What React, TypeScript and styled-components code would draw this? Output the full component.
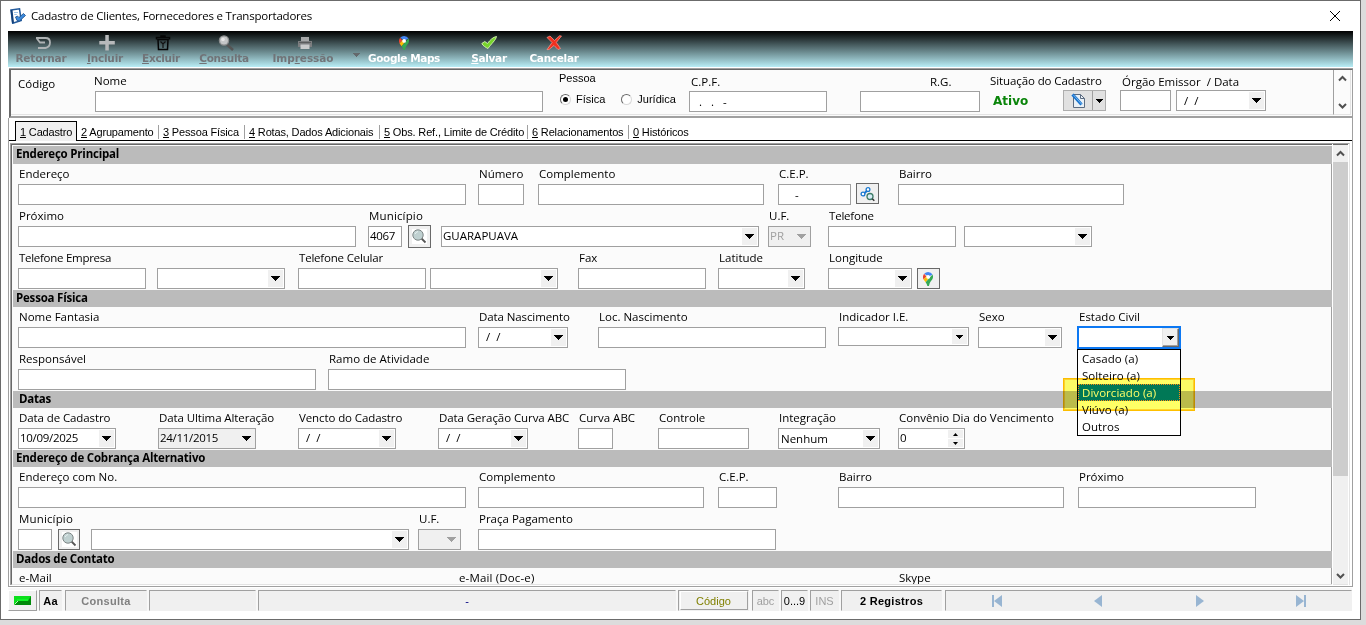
import { ReactNode } from "react";
import styled, { createGlobalStyle, css } from "styled-components";

const GlobalStyle = createGlobalStyle`
  * {
    box-sizing: border-box;
  }

  body {
    margin: 0;
    background: #dcdcdc;
    font-family: "Open Sans", sans-serif;
    font-size: 11.5px;
    color: #000;
    overflow: hidden;
  }
`;

const sansSerif = `"Liberation Sans", Arial, sans-serif`;
const verdana = `"DejaVu Sans", Verdana, sans-serif`;

const Window = styled.div`
  display: flex;
  flex-direction: column;
  width: 1361px;
  height: 620px;
  padding: 0 7px 8px;
  background: #fff;
  border: 1px solid #6b6b6b;
`;

const TitleBar = styled.div`
  display: flex;
  align-items: center;
  height: 30px;
  flex-shrink: 0;
  padding: 0 12px 1px 2px;
  letter-spacing: -0.21px;
`;

const Title = styled.span`
  flex: 1;
  padding-left: 5px;
`;

const Toolbar = styled.div`
  display: flex;
  width: 1345px;
  height: 36px;
  flex-shrink: 0;
  background: linear-gradient(#000, #b9eef6);
`;

const ToolButton = styled.div<{ $w: number; $off?: boolean; $track?: number }>`
  display: flex;
  flex-direction: column;
  align-items: center;
  width: ${(p) => p.$w}px;
  padding-top: 4px;
  font: bold 10.5px/14px ${verdana};
  letter-spacing: ${(p) => p.$track ?? -0.3}px;
  white-space: nowrap;
  color: ${(p) => (p.$off ? "#717478" : "#fff")};

  svg {
    flex-shrink: 0;
    margin-left: ${(p) => (p.$off ? 3 : 0)}px;
  }
`;

const ToolMenu = styled.div`
  display: flex;
  justify-content: center;
  width: 22px;
  padding: 22px 0 0 3px;
`;

const HeaderPanel = styled.div`
  display: flex;
  width: 1344px;
  height: 49px;
  margin-top: 2px;
  flex-shrink: 0;
  margin-left: 1px;
  background: #fbfbfb;
  border-top: 1px solid #696969;
  border-left: 2px solid #696969;
  border-right: 1px solid #a0a0a0;
  border-bottom: 2px solid #a0a0a0;
  box-shadow: 0 -1px 0 #a0a0a0;
`;

const HeaderForm = styled.div`
  display: flex;
  flex: 1;
  margin-bottom: 1px;
  border-bottom: 1px solid #e3e3e3;
`;

const HeaderGroup = styled.div<{ $gap: number; $w: number; $h?: number }>`
  display: flex;
  flex-direction: column;
  justify-content: space-between;
  flex-shrink: 0;
  width: ${(p) => p.$w}px;
  height: ${(p) => p.$h ?? 42}px;
  margin-left: ${(p) => p.$gap}px;
`;

const HeaderLabel = styled.div<{ $top: number; $indent?: number; $track?: number }>`
  margin-left: ${(p) => p.$indent ?? 0}px;
  padding-top: ${(p) => p.$top}px;
  height: ${(p) => p.$top + 15}px;
  line-height: 15px;
  letter-spacing: ${(p) => p.$track ?? 0}px;
  white-space: pre;
`;

const RadioGroupLabel = styled(HeaderLabel)`
  font: 11px/15px ${sansSerif};
`;

const RadioRow = styled.div`
  display: flex;
  align-items: center;
  gap: 16px;
  height: 28px;
  padding-left: 1px;
  font: 11px ${sansSerif};
`;

const RadioOption = styled.div`
  display: flex;
  align-items: center;
`;

const Radio = styled.span<{ $checked?: boolean }>`
  display: flex;
  align-items: center;
  justify-content: center;
  width: 11px;
  height: 11px;
  margin-right: 5px;
  border: 1px solid;
  border-color: #696969 #d8d8d8 #d8d8d8 #696969;
  border-radius: 50%;
  background: #fff;

  &::after {
    content: "";
    width: 5px;
    height: 5px;
    border-radius: 50%;
    background: ${(p) => (p.$checked ? "#000" : "transparent")};
  }
`;

const Status = styled.div`
  width: 37px;
  padding-left: 3px;
  font: bold 12px/16px ${verdana};
  color: #0a850a;
`;

const HeaderLine = styled.div`
  display: flex;
  align-items: center;
`;

const SplitButton = styled.div`
  display: flex;
  flex-shrink: 0;
  width: 43px;
  height: 21px;
  margin-left: 36px;
  border: 1px solid #adadad;
  background: #e1e1e1;

  > span {
    display: flex;
    align-items: center;
    justify-content: center;
    flex: 1;
  }

  > span:first-child {
    flex: 0 0 29px;
    border-right: 1px solid #a0a0a0;
  }
`;

const ScrollBar = styled.div<{ $w: number }>`
  display: flex;
  flex-direction: column;
  justify-content: space-between;
  align-items: center;
  flex-shrink: 0;
  width: ${(p) => p.$w}px;
  background: #f0f0f0;
`;

const HeaderScroll = styled(ScrollBar)`
  margin-right: 1px;
  margin-bottom: 1px;
  background: #fbfbfb;
  border-left: 1px solid #a0a0a0;
  border-right: 1px solid #e3e3e3;
  border-bottom: 1px solid #e3e3e3;
`;

const MainScroll = styled(ScrollBar)`
  justify-content: flex-start;
  margin: 0 1px;
  border-top: 1px solid #696969;
  border-bottom: 1px solid #e3e3e3;

  svg:last-child {
    margin-top: auto;
  }
`;

const Thumb = styled.div`
  align-self: stretch;
  flex: 0 0 314px;
  background: #cdcdcd;
`;

const TabsPanel = styled.div`
  display: flex;
  flex-direction: column;
  width: 1345px;
  height: 469px;
  flex-shrink: 0;
  border: 1px solid #a0a0a0;
  border-top: 0;
`;

const TabBar = styled.div`
  display: flex;
  align-items: flex-end;
  height: 23px;
  flex-shrink: 0;
  padding-left: 1px;
  border-bottom: 1px solid #000;
  font: 11px ${sansSerif};
`;

const Tab = styled.div<{ $w: number; $active?: boolean; $last?: boolean }>`
  width: ${(p) => p.$w}px;
  height: 14px;
  margin-bottom: 1px;
  padding-left: 4px;
  line-height: 15px;
  letter-spacing: -0.16px;
  white-space: nowrap;
  border-right: ${(p) => (p.$last ? 0 : 1)}px solid #a0a0a0;

  ${(p) =>
    p.$active &&
    css`
      height: 20px;
      margin: 0 0 -1px 5px;
      padding-top: 3px;
      background: #f0f0f0;
      border: 1px solid #000;
      border-bottom: 0;
    `}
`;

const Page = styled.div`
  display: flex;
  flex: 1;
  min-height: 0;
  margin: 2px 2px 1px 1px;
  border: 1px solid #a0a0a0;
  border-right: 1px solid #e3e3e3;
  border-bottom: 0;
`;

const Sheet = styled.div`
  flex: 1;
  overflow: hidden;
  padding: 1px 0 0 1px;
  background: #fbfbfb;
  border-top: 1px solid #696969;
  border-left: 1px solid #696969;
  border-bottom: 1px solid #e3e3e3;
`;

const SectionTitle = styled.div<{ $indent?: number; $h?: number }>`
  height: ${(p) => p.$h ?? 17}px;
  padding-left: ${(p) => p.$indent ?? 3}px;
  line-height: 16px;
  font-weight: 700;
  letter-spacing: -0.2px;
  background: #bbb;
`;

const SectionBody = styled.div`
  padding-left: 5px;
  border-right: 1px solid #a0a0a0;
`;

const Row = styled.div`
  display: flex;
  align-items: flex-start;
  height: 42px;
`;

const FieldBox = styled.div<{ $w: number; $gap: number }>`
  position: relative;
  flex-shrink: 0;
  width: ${(p) => p.$w}px;
  margin-left: ${(p) => p.$gap}px;
`;

const Label = styled.div<{ $track?: number; $indent?: number }>`
  height: 20px;
  padding-left: ${(p) => p.$indent ?? 1}px;
  line-height: 20px;
  letter-spacing: ${(p) => p.$track ?? 0}px;
  white-space: nowrap;
`;

const Input = styled.div<{ $off?: boolean; $h?: number; $focus?: boolean }>`
  display: flex;
  align-items: center;
  justify-content: space-between;
  width: 100%;
  height: ${(p) => p.$h ?? 21}px;
  padding: 1px;
  border: 1px solid #a0a0a0;
  background: ${(p) => (p.$off ? "#f0f0f0" : "#fff")};
  color: ${(p) => (p.$off ? "#a0a0a0" : "#000")};
  white-space: pre;

  ${(p) =>
    p.$focus &&
    css`
      height: 23px;
      margin-top: -1px;
      padding: 0;
      border: 2px solid #0c78f3;
    `}
`;

const Value = styled.span<{ $track?: number; $dark?: boolean; $top?: number; $indent?: number }>`
  line-height: 15px;
  letter-spacing: ${(p) => p.$track ?? 0}px;
  margin-top: ${(p) => p.$top ?? -2}px;
  margin-left: ${(p) => p.$indent ?? 0}px;
  ${(p) => p.$dark && "color: #000;"}
`;

const DropButton = styled.span<{ $raised?: boolean }>`
  display: flex;
  align-items: center;
  justify-content: center;
  align-self: stretch;
  width: 15px;
  margin-left: auto;
  background: #f0f0f0;

  ${(p) =>
    p.$raised &&
    css`
      width: 17px;
      border: 1px solid;
      border-color: #e3e3e3 #696969 #696969 #e3e3e3;
      box-shadow: inset -1px -1px 0 #a0a0a0;
    `}
`;

const Spin = styled.span`
  display: flex;
  flex-direction: column;
  align-self: stretch;
  gap: 1px;
  width: 15px;

  span {
    display: flex;
    flex: 1;
    align-items: center;
    justify-content: center;
    background: #f0f0f0;
  }
`;

const IconButton = styled.div<{ $gap: number; $top?: number; $w?: number; $h?: number }>`
  display: flex;
  align-items: center;
  justify-content: center;
  flex-shrink: 0;
  width: ${(p) => p.$w ?? 23}px;
  height: ${(p) => p.$h ?? 21}px;
  margin-left: ${(p) => p.$gap}px;
  margin-top: ${(p) => p.$top ?? 20}px;
  border: 1px solid #696969;
  background: #f0f0f0;
`;

const Options = styled.div`
  position: absolute;
  z-index: 2;
  top: 42px;
  left: 0;
  width: 104px;
  border: 1px solid #000;
  background: #fff;
`;

const Option = styled.div<{ $selected?: boolean }>`
  height: 17px;
  padding-left: 4px;
  line-height: 17px;
  letter-spacing: 0.05px;

  ${(p) =>
    p.$selected &&
    css`
      background: #0078d7;
      color: #fff;
      outline: 1px dotted #ff8728;
      outline-offset: -1px;
    `}
`;

const Marker = styled.div`
  position: absolute;
  z-index: 3;
  top: 71px;
  left: -14px;
  width: 132px;
  height: 33px;
  border: 1px solid #ffc000;
  box-shadow: inset 0 0 0 1px #ffd52e;
  background: #ffff66;
  mix-blend-mode: multiply;
`;

const StatusBar = styled.div`
  display: flex;
  align-items: flex-start;
  width: 1344px;
  height: 23px;
  flex-shrink: 0;
  margin-top: 1px;
  padding-top: 2px;
  font: 11px ${sansSerif};
  background: #f8f8f8;
`;

const Cell = styled.div<{ $w: number; $gap?: number; $color?: string; $bold?: boolean; $raised?: boolean }>`
  display: flex;
  align-items: center;
  justify-content: center;
  flex-shrink: 0;
  width: ${(p) => p.$w}px;
  height: 21px;
  margin-left: ${(p) => p.$gap ?? 3}px;
  border: 1px solid;
  border-color: ${(p) => (p.$raised ? "#fff #a0a0a0 #a0a0a0 #fff" : "#a0a0a0 #f0f0f0 #f0f0f0 #a0a0a0")};
  background: #f0f0f0;
  color: ${(p) => p.$color ?? "#000"};
  font-weight: ${(p) => (p.$bold ? "bold" : "normal")};
  letter-spacing: ${(p) => (p.$bold ? 0.3 : 0)}px;
`;

const CellButton = styled.span`
  display: flex;
  align-items: center;
  justify-content: center;
  width: 68px;
  height: 19px;
  border: 1px solid;
  border-color: #fff #a0a0a0 #a0a0a0 #fff;
`;

const Nav = styled(Cell)`
  justify-content: flex-start;
  padding-left: 46px;
  gap: 92px;
`;

const Arrow = ({ small, color = "#000" }: { small?: boolean; color?: string }) => (
  <svg width={small ? 7 : 9} height={small ? 4 : 5} viewBox="0 0 9 5" preserveAspectRatio="none" shapeRendering="crispEdges">
    <path d="M0 0h9L5 5H4z" fill={color} />
  </svg>
);

const Chevron = ({ down }: { down?: boolean }) => (
  <svg width="15" height="17" viewBox="0 0 15 17">
    <path d={down ? "M4 7l3.5 3.5L11 7" : "M4 10.5L7.5 7l3.5 3.5"} fill="none" stroke="#505050" strokeWidth="2" />
  </svg>
);

const Magnifier = () => (
  <svg width="17" height="17" viewBox="0 0 17 17">
    <path fill="#fff" d="M1 1h15v15H1z" />
    <path d="M10.500 10.500l4 4" stroke="#555" strokeWidth="1.800" />
    <circle cx="7" cy="7" r="5.200" fill="#bfd0d0" stroke="#7d8585" />
    <path d="M4 6q1-2 3-2.500" stroke="#e8f2f2" fill="none" />
  </svg>
);

const MapPin = ({ size }: { size: number }) => (
  <svg width={(size * 11) / 15} height={size} viewBox="0 0 11 15">
    <path d="M1.300 2L3.600 4.700.6 8A5.500 5.500 0 0 1 1.300 2z" fill="#ea4335" />
    <path d="M5.500 0a5.500 5.500 0 0 1 4.700 2.700L6 5 1.300 2A5.500 5.500 0 0 1 5.500 0z" fill="#4285f4" />
    <path d="M.6 8l4-4.500L6 7 2.800 11z" fill="#fbbc04" />
    <path d="M10.200 2.700c1.600 3.500-.6 5.600-2 7.500-1 1.300-1.300 3-1.800 4.800H4.700c-.4-1.500-.9-2.800-1.900-4z" fill="#34a853" />
    <circle cx="5.500" cy="5.300" r="2" fill="#fff" />
  </svg>
);

const AppIcon = () => (
  <svg width="16" height="16" viewBox="0 0 16 16">
    <path d="M1 2L9.500.8l1.700 11.700-8.500 2.800z" fill="#fff" stroke="#245b9c" strokeWidth="1.500" />
    <path d="M1.500 2L3 14.800" stroke="#123f79" strokeWidth="2" />
    <path d="M4 4.500h4M4.300 6.500h2.500" stroke="#9fc4e8" />
    <path d="M5.500 9l2-1 1.500 1.500 4.500-4 2 2-6 5.500-2.500-.5z" fill="#3d8bdc" stroke="#174a86" strokeWidth=".8" />
  </svg>
);

const LinkSearch = () => (
  <svg width="16" height="16" viewBox="0 0 16 16" fill="none">
    <path d="M4 7.500l4-3.500" stroke="#1878d0" strokeWidth="2" />
    <circle cx="3" cy="8" r="1.900" stroke="#1878d0" strokeWidth="1.300" fill="#fff" />
    <circle cx="8" cy="3.500" r="1.900" stroke="#1878d0" strokeWidth="1.300" fill="#fff" />
    <circle cx="10" cy="10.500" r="3" stroke="#3f7d68" strokeWidth="1.300" fill="#d9edf8" />
    <path d="M12.300 12.800l2 2" stroke="#333" strokeWidth="1.500" />
  </svg>
);

const EditPage = () => (
  <svg width="15" height="16" viewBox="0 0 15 16">
    <path d="M2.500 1.500h7l4 4v9h-11z" fill="#e9f0f6" stroke="#5b6b80" />
    <path d="M9.500 1.500v4h4" fill="none" stroke="#5b6b80" />
    <path d="M1.500 1.500l9 10" stroke="#1673cf" strokeWidth="3" />
    <path d="M2.500 2l8.500 9.500" stroke="#8fc4f2" strokeWidth=".8" />
  </svg>
);

const toolIcons: Record<string, ReactNode> = {
  retornar: <path d="M1 3h9.500q4.500 0 4.500 4.500T10.500 13H3M1.500 3L5 7.500h5" fill="none" stroke="#aeb2b4" strokeWidth="1.800" />,
  incluir: <path d="M6.300 0h3.500v6h6v3.500h-6v6H6.300v-6h-6V6h6z" fill="#b7b9bb" />,
  excluir: (
    <g fill="none" stroke="#050505" strokeWidth="1.500">
      <path d="M3 4.500h10l-.5 10h-9zM1.500 4.500V2.500h13v2M6 2.500V1h4v1.500" />
      <path d="M5.500 6.500L8 9l2.500-2.500M8 9v4" stroke="#111" strokeWidth="1.200" />
    </g>
  ),
  consulta: (
    <g>
      <path d="M9 9.500l6 5.500" stroke="#555" strokeWidth="2.500" />
      <circle cx="6" cy="5.500" r="4.600" fill="#c4c6c7" stroke="#8b8d8e" strokeWidth="1.300" />
      <circle cx="5" cy="4.500" r="1.800" fill="#e6e6e6" />
    </g>
  ),
  impressao: (
    <g>
      <path d="M4 2h8v4H4z" fill="#a5a7a8" />
      <path d="M1 6h14v6H1z" fill="#7c7e80" />
      <path d="M3.500 9.500h9V14h-9z" fill="#c9cbcc" />
      <path d="M2 7.500h12" stroke="#5a5c5d" />
    </g>
  ),
  salvar: <path d="M.8 8.500l3-2 2.700 2C9 5 12 2 15.500 1.500 15 5 10 9 7 13.500 5 12.500 2 11 .8 8.500z" fill="#76d42c" stroke="#d8f5b4" strokeWidth=".9" />,
  cancelar: (
    <path
      d="M1 2.500l3-1.500L8.500 5.500 13.500.8l2 .2-5.200 6.500 4.200 6-2.500 1L8 10.500 3 14.500l-2 .2 5-7.200z"
      fill="#f0301f"
      stroke="#ff9b8f"
      strokeWidth=".7"
    />
  ),
};

const ToolIcon = ({ name }: { name: string }) => (
  <svg width="16" height="16" viewBox="0 0 16 16">
    {toolIcons[name]}
  </svg>
);

const NavIcon = ({ d, w }: { d: string; w: number }) => (
  <svg width={w} height="12" viewBox={`0 0 ${w} 12`}>
    <path d={d} fill="#98b5d2" />
  </svg>
);

interface FieldProps {
  w: number;
  gap?: number;
  label?: string;
  value?: string;
  drop?: boolean;
  smallDrop?: boolean;
  off?: boolean;
  gray?: boolean;
  focus?: boolean;
  h?: number;
  track?: number;
  valueTrack?: number;
  valueTop?: number;
  valueIndent?: number;
  children?: ReactNode;
}

const Field = (p: FieldProps) => (
  <FieldBox $w={p.w} $gap={p.gap ?? 0}>
    <Label $track={p.track} $indent={p.focus ? 2 : 1}>
      {p.label}
    </Label>
    <Input $off={p.off || p.gray} $h={p.h} $focus={p.focus}>
      <Value $track={p.valueTrack} $dark={p.gray} $top={p.valueTop} $indent={p.valueIndent}>
        {p.value}
      </Value>
      {p.drop && (
        <DropButton $raised={p.focus}>
          <Arrow small={p.smallDrop} color={p.off ? "#a0a0a0" : undefined} />
        </DropButton>
      )}
    </Input>
    {p.children}
  </FieldBox>
);

const App = () => (
  <>
    <GlobalStyle />
    <Window>
      <TitleBar>
        <AppIcon />
        <Title>Cadastro de Clientes, Fornecedores e Transportadores</Title>
        <svg width="12" height="12" viewBox="0 0 12 12">
          <path d="M1 1l10 10M11 1L1 11" stroke="#000" />
        </svg>
      </TitleBar>

      <Toolbar>
        <ToolButton $w={66} $off $track={-0.15}>
          <ToolIcon name="retornar" />
          Retornar
        </ToolButton>
        <ToolButton $w={62} $off $track={-0.2}>
          <ToolIcon name="incluir" />
          <span>
            <u>I</u>ncluir
          </span>
        </ToolButton>
        <ToolButton $w={50} $off>
          <ToolIcon name="excluir" />
          <span>
            <u>E</u>xcluir
          </span>
        </ToolButton>
        <ToolButton $w={76} $off>
          <ToolIcon name="consulta" />
          <span>
            <u>C</u>onsulta
          </span>
        </ToolButton>
        <ToolButton $w={82} $off $track={-0.05}>
          <ToolIcon name="impressao" />
          <span>
            Imp<u>r</u>essão
          </span>
        </ToolButton>
        <ToolMenu>
          <Arrow small color="#64696c" />
        </ToolMenu>
        <ToolButton $w={76} $track={-0.4}>
          <svg width="16" height="16" viewBox="0 0 16 16">
            <g transform="translate(3 1)">
              <MapPin size={14} />
            </g>
          </svg>
          Google Maps
        </ToolButton>
        <ToolButton $w={94}>
          <ToolIcon name="salvar" />
          <span>
            <u>S</u>alvar
          </span>
        </ToolButton>
        <ToolButton $w={36}>
          <ToolIcon name="cancelar" />
          Cancelar
        </ToolButton>
      </Toolbar>

      <HeaderPanel>
        <HeaderForm>
          <HeaderGroup $gap={7} $w={77}>
            <HeaderLabel $top={6}>Código</HeaderLabel>
          </HeaderGroup>
          <HeaderGroup $gap={0} $w={448}>
            <HeaderLabel $top={3} $indent={-1}>
              Nome
            </HeaderLabel>
            <Input />
          </HeaderGroup>
          <HeaderGroup $gap={16} $w={130}>
            <RadioGroupLabel $top={1}>Pessoa</RadioGroupLabel>
            <RadioRow>
              <RadioOption>
                <Radio $checked />
                Física
              </RadioOption>
              <RadioOption>
                <Radio />
                Jurídica
              </RadioOption>
            </RadioRow>
          </HeaderGroup>
          <HeaderGroup $gap={0} $w={138}>
            <HeaderLabel $top={4} $indent={2}>
              C.P.F.
            </HeaderLabel>
            <Input>
              <Value $top={0} $indent={2}>
                {"  .   .   -"}
              </Value>
            </Input>
          </HeaderGroup>
          <HeaderGroup $gap={33} $w={120}>
            <HeaderLabel $top={4} $indent={70}>
              R.G.
            </HeaderLabel>
            <Input />
          </HeaderGroup>
          <HeaderGroup $gap={10} $w={130} $h={41}>
            <HeaderLabel $top={3} $track={-0.1}>
              Situação do Cadastro
            </HeaderLabel>
            <HeaderLine>
              <Status>Ativo</Status>
              <SplitButton>
                <span>
                  <EditPage />
                </span>
                <span>
                  <Arrow small />
                </span>
              </SplitButton>
            </HeaderLine>
          </HeaderGroup>
          <HeaderGroup $gap={0} $w={51} $h={41}>
            <HeaderLabel $top={4} $indent={2}>
              Órgão Emissor  / Data
            </HeaderLabel>
            <Input />
          </HeaderGroup>
          <HeaderGroup $gap={5} $w={90} $h={41}>
            <HeaderLabel $top={3} />
            <Input>
              <Value $top={-1}>{"  /  /"}</Value>
              <DropButton>
                <Arrow />
              </DropButton>
            </Input>
          </HeaderGroup>
        </HeaderForm>
        <HeaderScroll $w={18}>
          <Chevron />
          <Chevron down />
        </HeaderScroll>
      </HeaderPanel>

      <TabsPanel>
        <TabBar>
          <Tab $w={62} $active>
            <u>1</u> Cadastro
          </Tab>
          <Tab $w={82}>
            <u>2</u> Agrupamento
          </Tab>
          <Tab $w={86}>
            <u>3</u> Pessoa Física
          </Tab>
          <Tab $w={135}>
            <u>4</u> Rotas, Dados Adicionais
          </Tab>
          <Tab $w={148}>
            <u>5</u> Obs. Ref., Limite de Crédito
          </Tab>
          <Tab $w={101}>
            <u>6</u> Relacionamentos
          </Tab>
          <Tab $w={80} $last>
            <u>0</u> Históricos
          </Tab>
        </TabBar>

        <Page>
          <Sheet>
            <SectionTitle $h={18}>Endereço Principal</SectionTitle>
            <SectionBody>
              <Row>
                <Field w={448} label="Endereço" />
                <Field gap={12} w={46} label="Número" />
                <Field gap={14} w={226} label="Complemento" />
                <Field gap={14} w={73} label="C.E.P." value="     -" valueTop={0} />
                <IconButton $gap={5} $top={19}>
                  <LinkSearch />
                </IconButton>
                <Field gap={19} w={226} label="Bairro" />
              </Row>
              <Row>
                <Field w={338} label="Próximo" />
                <Field gap={12} w={34} label="Município" track={0.15} value="4067" valueTrack={-0.3} />
                <IconButton $gap={6} $top={19} $h={23}>
                  <Magnifier />
                </IconButton>
                <Field gap={10} w={318} value="GUARAPUAVA" drop />
                <Field gap={9} w={43} label="U.F." value="PR" off drop />
                <Field gap={17} w={128} label="Telefone" track={-0.2} />
                <Field gap={8} w={128} drop />
              </Row>
              <Row>
                <Field w={128} label="Telefone Empresa" track={-0.28} />
                <Field gap={11} w={128} drop />
                <Field gap={13} w={128} label="Telefone Celular" track={-0.2} />
                <Field gap={4} w={128} drop />
                <Field gap={20} w={128} label="Fax" />
                <Field gap={12} w={87} label="Latitude" drop />
                <Field gap={23} w={84} label="Longitude" drop />
                <IconButton $gap={5}>
                  <MapPin size={14} />
                </IconButton>
              </Row>
            </SectionBody>

            <SectionTitle>Pessoa Física</SectionTitle>
            <SectionBody>
              <Row>
                <Field w={448} label="Nome Fantasia" />
                <Field gap={12} w={90} label="Data Nascimento" track={-0.1} value="  /  /" drop />
                <Field gap={30} w={228} label="Loc. Nascimento" />
                <Field gap={12} w={131} label="Indicador I.E." h={19} drop smallDrop />
                <Field gap={9} w={84} label="Sexo" drop />
                <Field gap={15} w={104} label="Estado Civil" focus drop smallDrop>
                  <Options>
                    <Option>Casado (a)</Option>
                    <Option>Solteiro (a)</Option>
                    <Option $selected>Divorciado (a)</Option>
                    <Option>Viúvo (a)</Option>
                    <Option>Outros</Option>
                  </Options>
                  <Marker />
                </Field>
              </Row>
              <Row>
                <Field w={298} label="Responsável" />
                <Field gap={12} w={298} label="Ramo de Atividade" />
              </Row>
            </SectionBody>

            <SectionTitle $indent={6}>Datas</SectionTitle>
            <SectionBody>
              <Row>
                <Field w={98} label="Data de Cadastro" track={-0.1} value="10/09/2025" valueTrack={-0.3} drop />
                <Field gap={42} w={98} label="Data Ultima Alteração" track={-0.1} value="24/11/2015" valueTrack={-0.3} gray drop />
                <Field gap={42} w={98} label="Vencto do Cadastro" track={-0.1} value="  /  /" drop />
                <Field gap={42} w={90} label="Data Geração Curva ABC" track={-0.08} value="  /  /" drop />
                <Field gap={50} w={35} label="Curva ABC" />
                <Field gap={45} w={91} label="Controle" />
                <Field gap={29} w={102} label="Integração" value="Nenhum" valueTop={0} valueIndent={1} drop />
                <FieldBox $gap={18} $w={67}>
                  <Label>Convênio Dia do Vencimento</Label>
                  <Input>
                    <Value>0</Value>
                    <Spin>
                      <span>
                        <svg width="5" height="3" viewBox="0 0 5 3">
                          <path d="M0 3h5L2.500 0z" />
                        </svg>
                      </span>
                      <span>
                        <svg width="5" height="3" viewBox="0 0 5 3">
                          <path d="M0 0h5L2.500 3z" />
                        </svg>
                      </span>
                    </Spin>
                  </Input>
                </FieldBox>
              </Row>
            </SectionBody>

            <SectionTitle>Endereço de Cobrança Alternativo</SectionTitle>
            <SectionBody>
              <Row>
                <Field w={448} label="Endereço com No." />
                <Field gap={12} w={226} label="Complemento" />
                <Field gap={14} w={59} label="C.E.P." />
                <Field gap={61} w={226} label="Bairro" />
                <Field gap={14} w={178} label="Próximo" />
              </Row>
              <Row>
                <Field w={34} label="Município" track={0.15} />
                <IconButton $gap={6} $w={22}>
                  <Magnifier />
                </IconButton>
                <Field gap={11} w={318} drop />
                <Field gap={9} w={43} label="U.F." off drop />
                <Field gap={17} w={298} label="Praça Pagamento" />
              </Row>
            </SectionBody>

            <SectionTitle>Dados de Contato</SectionTitle>
            <SectionBody>
              <Row>
                <FieldBox $gap={0} $w={440}>
                  <Label>e-Mail</Label>
                </FieldBox>
                <FieldBox $gap={0} $w={440}>
                  <Label $track={0.15}>e-Mail (Doc-e)</Label>
                </FieldBox>
                <FieldBox $gap={0} $w={178}>
                  <Label>Skype</Label>
                </FieldBox>
              </Row>
            </SectionBody>
          </Sheet>
          <MainScroll $w={15}>
            <Chevron />
            <Thumb />
            <Chevron down />
          </MainScroll>
        </Page>
      </TabsPanel>

      <StatusBar>
        <Cell $w={29} $gap={0} $raised>
          <svg width="17" height="9" viewBox="0 0 17 9">
            <path d="M0 0h17v9H0z" fill="#008a0a" />
            <path d="M0 0h17l-3 5H3L0 9z" fill="#0be01c" />
            <path d="M3 3h11v2H3z" fill="#12f428" />
            <path d="M.5 8.500L4 5" stroke="#b6ffb6" />
          </svg>
        </Cell>
        <Cell $w={23} $gap={2} $bold>
          Aa
        </Cell>
        <Cell $w={82} $bold $color="#808080">
          Consulta
        </Cell>
        <Cell $w={107} $gap={2} />
        <Cell $w={418} $gap={2} $color="#000080">
          -
        </Cell>
        <Cell $w={71} $gap={2} $color="#808000">
          <CellButton>Código</CellButton>
        </Cell>
        <Cell $w={27} $color="#a0a0a0">
          abc
        </Cell>
        <Cell $w={27} $gap={2}>
          0...9
        </Cell>
        <Cell $w={29} $gap={2} $color="#a0a0a0">
          INS
        </Cell>
        <Cell $w={101} $gap={2} $bold>
          2 Registros
        </Cell>
        <Nav $w={407}>
          <NavIcon w={10} d="M0 0h2v12H0zM10 0v12L2 6z" />
          <NavIcon w={9} d="M8 0v12L0 6z" />
          <NavIcon w={9} d="M1 0v12l8-6z" />
          <NavIcon w={10} d="M8 0h2v12H8zM0 0v12l8-6z" />
        </Nav>
      </StatusBar>
    </Window>
  </>
);

export default App;
